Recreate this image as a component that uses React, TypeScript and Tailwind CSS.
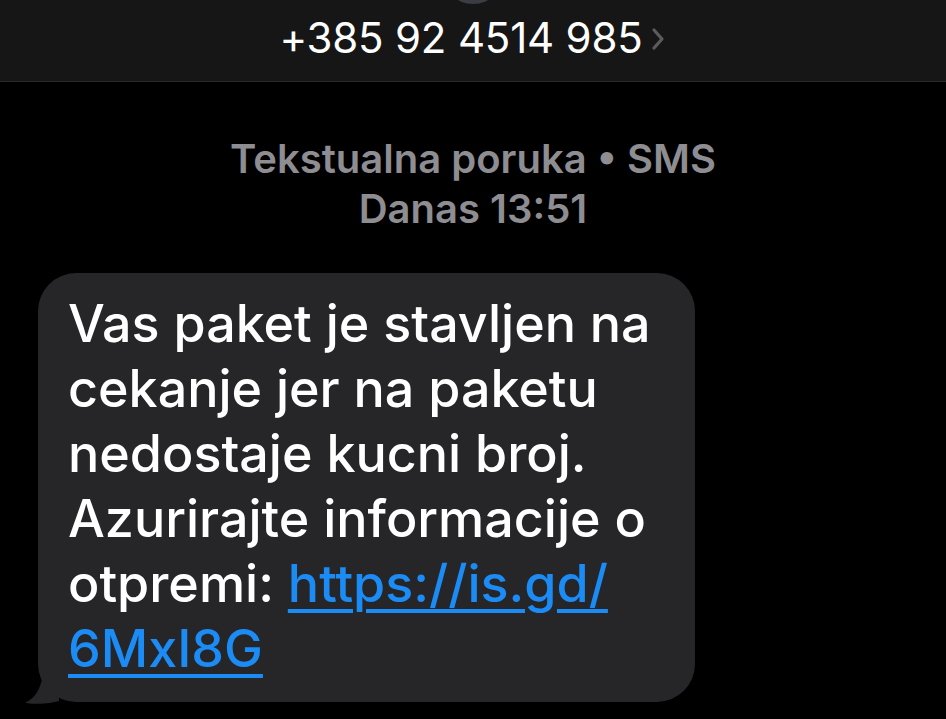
import React from "react";

const sf = { fontFamily: "Inter, 'Noto Sans', sans-serif" };

function Header() {
    return (
        <div className="relative h-[82px] bg-[#161616] border-b border-[#2b2b2b] flex items-end justify-center overflow-hidden">
            {/* avatar peeking from above */}
            <div className="absolute left-[442px] -top-[58px] w-[62px] h-[62px] rounded-full bg-[#3a3d44]" />
            <div className="flex items-center pb-[19px]">
                <span className="text-[42px] leading-[48px] text-white tracking-[-0.2px]">+385 92 4514 985</span>
                <svg width="18" height="26" viewBox="0 0 18 26" className="ml-[6px] mt-[2px]">
                    <path d="M5 4 L13 13 L5 22" fill="none" stroke="#5b5b5e" strokeWidth="3.2" strokeLinecap="round" strokeLinejoin="round" />
                </svg>
            </div>
        </div>
    );
}

function Bubble() {
    return (
        <div className="relative ml-[38px] w-[657px]">
            {/* tail */}
            <svg width="40" height="48" viewBox="0 0 40 48" className="absolute -left-[13px] bottom-[-3px]">
                <path d="M20 0 L34 0 L34 44 C26 46 16 48 0 46 C12 40 18 30 20 0 Z" fill="#262628" />
            </svg>
            <div className="relative rounded-[38px] bg-[#262628] pl-[30px] pr-[16px] pt-[18px] pb-[21px]">
                <p className="text-[52px] leading-[65px] font-medium text-white whitespace-nowrap">
                    Vas paket je stavljen na
                    <br />
                    cekanje jer na paketu
                    <br />
                    nedostaje kucni broj.
                    <br />
                    Azurirajte informacije o
                    <br />
                    otpremi:{" "}
                    <span className="text-[#1b8bf5] underline decoration-[4px] underline-offset-[7px]">
                        https://is.gd/
                        <br />
                        6MxI8G
                    </span>
                </p>
            </div>
        </div>
    );
}

export default function App() {
    return (
        <div className="w-[946px] h-[719px] bg-black overflow-hidden" style={sf}>
            <Header />
            <div className="flex flex-col items-center pt-[52px] pb-[39px]">
                <div className="text-[40px] leading-[50px] font-semibold text-[#8d8d92]">Tekstualna poruka • SMS</div>
                <div className="text-[40px] leading-[50px] font-semibold text-[#8d8d92]">Danas 13:51</div>
            </div>
            <Bubble />
        </div>
    );
}
